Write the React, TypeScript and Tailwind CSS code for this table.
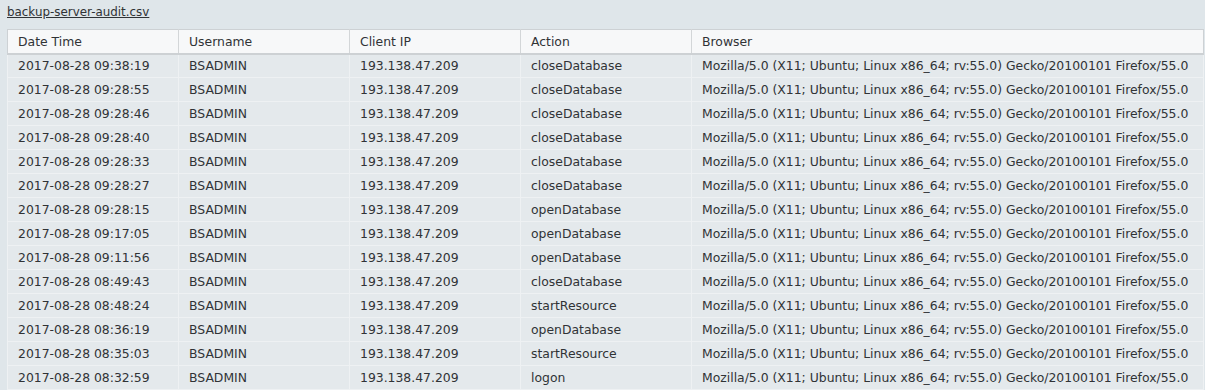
const rows: [string, string][] = [
  ["2017-08-28 09:38:19", "closeDatabase"],
  ["2017-08-28 09:28:55", "closeDatabase"],
  ["2017-08-28 09:28:46", "closeDatabase"],
  ["2017-08-28 09:28:40", "closeDatabase"],
  ["2017-08-28 09:28:33", "closeDatabase"],
  ["2017-08-28 09:28:27", "closeDatabase"],
  ["2017-08-28 09:28:15", "openDatabase"],
  ["2017-08-28 09:17:05", "openDatabase"],
  ["2017-08-28 09:11:56", "openDatabase"],
  ["2017-08-28 08:49:43", "closeDatabase"],
  ["2017-08-28 08:48:24", "startResource"],
  ["2017-08-28 08:36:19", "openDatabase"],
  ["2017-08-28 08:35:03", "startResource"],
  ["2017-08-28 08:32:59", "logon"],
];

const browser = "Mozilla/5.0 (X11; Ubuntu; Linux x86_64; rv:55.0) Gecko/20100101 Firefox/55.0";

export default function App() {
  return (
    <div className="h-[390px] overflow-hidden bg-[#dfe6ea] px-[7px] pt-[4px] text-[12.4px] text-[#303336] font-['DejaVu_Sans',sans-serif]">
      <div className="h-[25px] text-[11.9px]">
        <a className="underline">backup-server-audit.csv</a>
      </div>
      <table className="w-[1197px] table-fixed border-collapse">
        <colgroup>
          <col className="w-[171px]" />
          <col className="w-[171px]" />
          <col className="w-[171px]" />
          <col className="w-[171px]" />
          <col />
        </colgroup>
        <thead>
          <tr className="h-[24px] bg-[#f7f8f9] border border-[#cdd1d4] border-b-2">
            {["Date Time", "Username", "Client IP", "Action", "Browser"].map((h) => (
              <th key={h} className="px-[10px] pt-[2px] text-left font-normal border-r border-[#d3d6d8] last:border-r-0">
                {h}
              </th>
            ))}
          </tr>
        </thead>
        <tbody>
          {rows.map(([time, action]) => (
            <tr key={time} className="h-[24px] bg-[#e4e9ec] border-b border-[#eef1f3]">
              <td className="px-[10px] pt-[2px] border-x border-[#eef1f3] whitespace-nowrap">{time}</td>
              <td className="px-[10px] pt-[2px] border-r border-[#eef1f3]">BSADMIN</td>
              <td className="px-[10px] pt-[2px] border-r border-[#eef1f3]">193.138.47.209</td>
              <td className="px-[10px] pt-[2px] border-r border-[#eef1f3]">{action}</td>
              <td className="px-[10px] pt-[2px] border-r border-[#eef1f3] whitespace-nowrap">{browser}</td>
            </tr>
          ))}
        </tbody>
      </table>
    </div>
  );
}
